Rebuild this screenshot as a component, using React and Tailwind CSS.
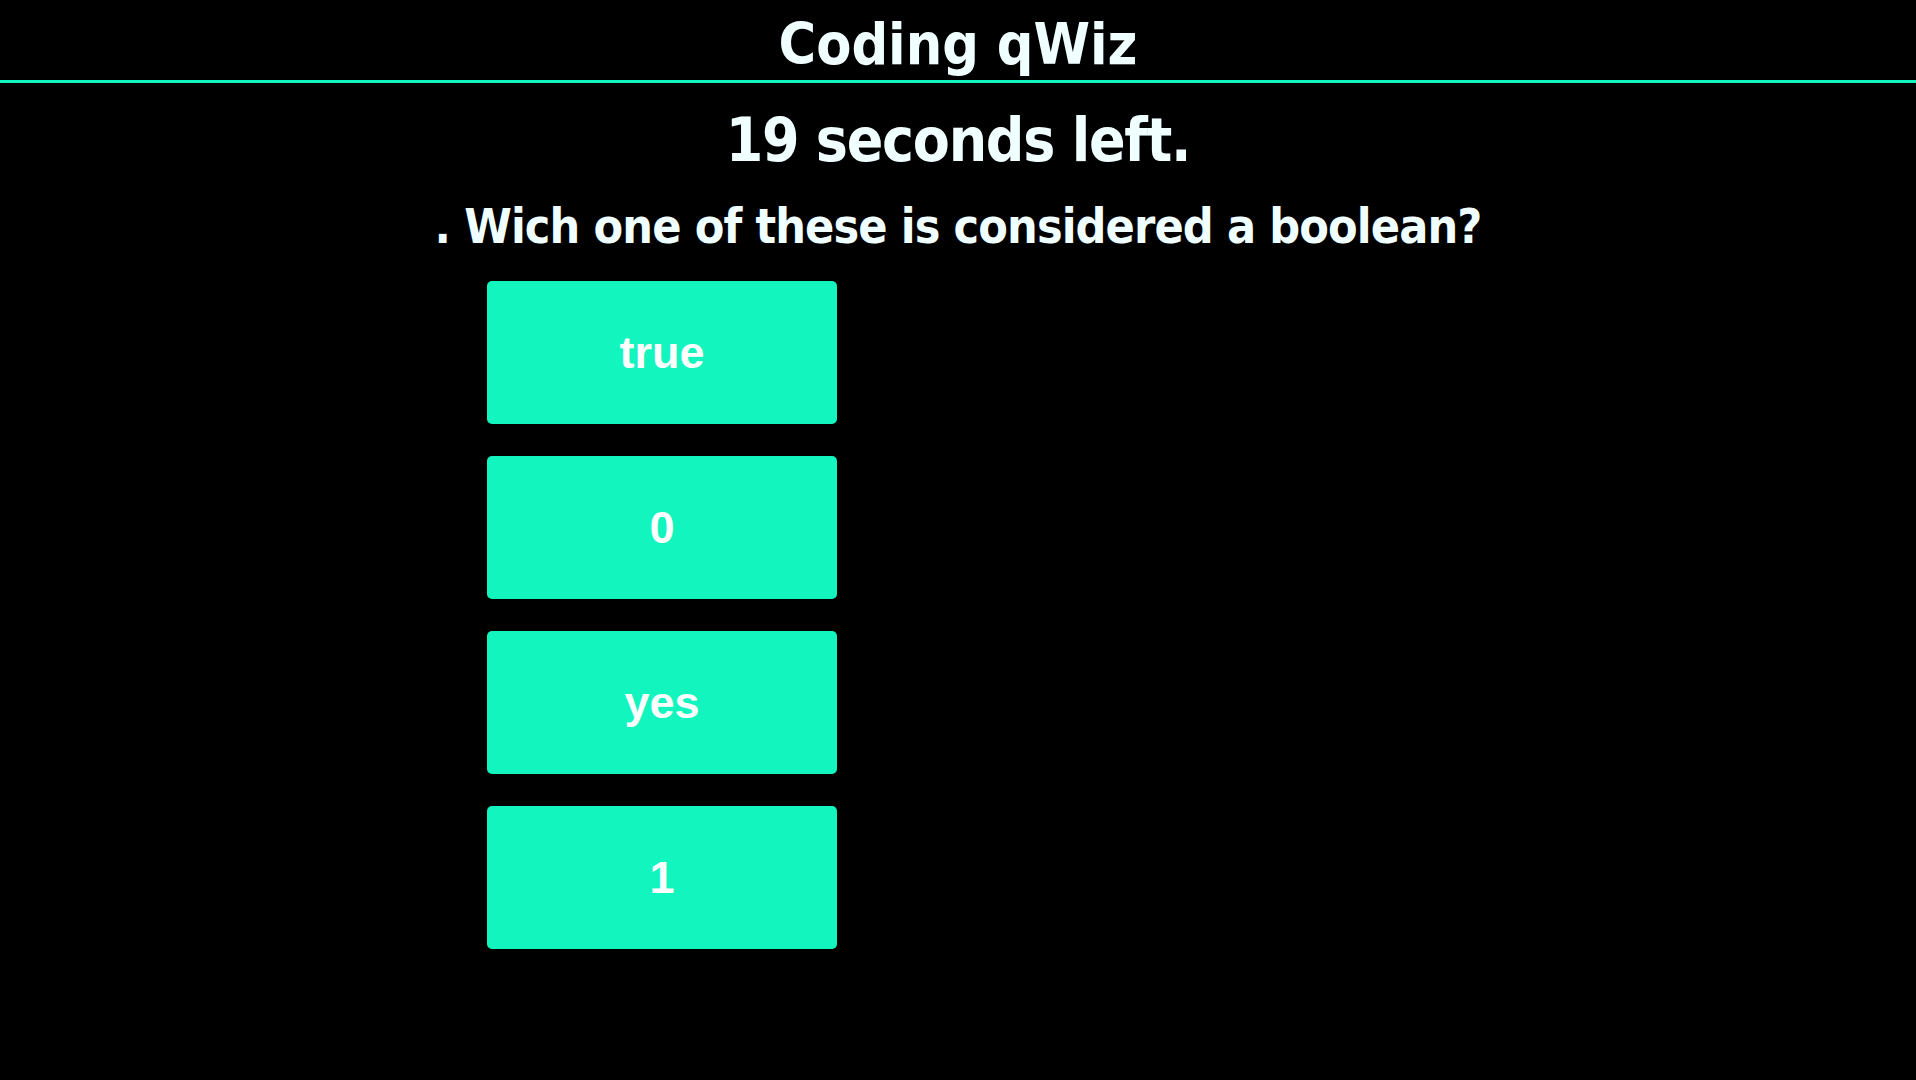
import React from 'react';

const answers = ['true', '0', 'yes', '1'];

const headFont = { fontFamily: '"DejaVu Sans Condensed", "DejaVu Sans", sans-serif', fontStretch: 'semi-condensed' };

function App() {
  return (
    <div className="min-h-screen bg-black text-[#f0ffff]" style={headFont}>
      {/* header */}
      <header className="h-[83px] border-b-[3px] border-[#13f5be]">
        <h1 className="m-0 pt-[16px] text-center text-[57px] font-bold leading-none">Coding qWiz</h1>
      </header>

      <main>
        <h2 className="mt-[27px] text-center text-[60px] font-bold leading-none tracking-[-1.25px]">19 seconds left.</h2>
        <p className="mt-[32px] text-center text-[48px] font-bold leading-none tracking-[-0.9px]">. Wich one of these is considered a boolean?</p>

        <div className="mt-[31px] flex flex-col gap-[32px] pl-[487px]">
          {answers.map((a) => (
            <button
              key={a}
              className="flex h-[143px] w-[350px] items-center justify-center rounded-[5px] bg-[#13f5be] text-[45px] font-bold text-white"
              style={{ fontFamily: '"Liberation Sans", Arial, sans-serif' }}
            >
              {a}
            </button>
          ))}
        </div>
      </main>
    </div>
  );
}

export default App;
